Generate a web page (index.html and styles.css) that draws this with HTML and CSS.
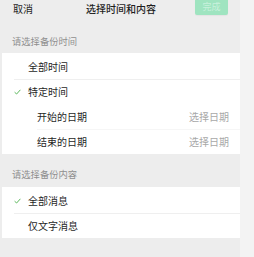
FILE: index.html
```html
<!DOCTYPE html>
<html lang="zh">
<head>
<meta charset="utf-8">
<link rel="stylesheet" href="styles.css">
</head>
<body>
<div class="page">
  <div class="main">
    <div class="header">
      <span class="cancel">取消</span>
      <span class="title">选择时间和内容</span>
      <span class="done">完成</span>
    </div>
    <div class="label first">请选择备份时间</div>
    <div class="panel">
      <div class="row"><span class="check"></span><span class="txt">全部时间</span></div>
      <div class="row sep"><span class="check"><svg width="7" height="6" viewBox="0 0 7 6"><path d="M0.6 3.2 L2.6 5 L6.4 0.8" fill="none" stroke="#5cb85c" stroke-width="1"/></svg></span><span class="txt">特定时间</span></div>
      <div class="row sub"><span class="txt">开始的日期</span><span class="val">选择日期</span></div>
      <div class="row sub sep2"><span class="txt">结束的日期</span><span class="val">选择日期</span></div>
    </div>
    <div class="label second">请选择备份内容</div>
    <div class="panel">
      <div class="row"><span class="check"><svg width="7" height="6" viewBox="0 0 7 6"><path d="M0.6 3.2 L2.6 5 L6.4 0.8" fill="none" stroke="#5cb85c" stroke-width="1"/></svg></span><span class="txt">全部消息</span></div>
      <div class="row sep"><span class="check"></span><span class="txt">仅文字消息</span></div>
    </div>
  </div>
  <div class="strip"></div>
</div>
</body>
</html>
```
FILE: styles.css
```css
html, body {
  margin: 0;
  padding: 0;
}
body {
  font-family: "Noto Sans CJK SC", "Noto Sans", sans-serif;
  font-size: 10px;
  color: #1f1f1f;
  background: #ededed;
}
.page {
  display: flex;
  height: 257px;
  overflow: hidden;
}
.main {
  width: 240px;
  background: #ededed;
}
.strip {
  flex: 1;
  background: #f3f3f3;
}
.header {
  display: flex;
  align-items: center;
  height: 18px;
  padding-left: 13px;
  padding-right: 12px;
  line-height: 12px;
}
.cancel {
  width: 73px;
}
.title {
  flex: 1;
  font-weight: 500;
}
.done {
  align-self: flex-start;
  margin-top: -3px;
  width: 33px;
  height: 18px;
  line-height: 20px;
  text-align: center;
  background: #9fe4c0;
  color: #c8f1dc;
  border-radius: 2px;
  font-size: 9px;
  box-shadow: 0 1px 1px rgba(0,0,0,0.04);
}
.label {
  line-height: 12px;
  font-size: 9.3px;
  color: #8f8f8f;
  padding-left: 12px;
}
.label.first {
  padding-top: 17px;
  padding-bottom: 6px;
}
.label.second {
  padding-top: 14px;
  padding-bottom: 7px;
}
.panel {
  background: #ffffff;
  margin-left: 2px;
  padding-top: 1px;
}
.row {
  display: flex;
  align-items: center;
  height: 25px;
  padding-left: 12px;
  padding-right: 11px;
}
.row.sep {
  background: linear-gradient(#efefef, #efefef) no-repeat 12px 0 / calc(100% - 12px) 1px;
}
.check {
  width: 14px;
  display: flex;
  align-items: center;
}
.sub {
  padding-left: 35px;
}
.sub.sep2 {
  background: linear-gradient(#f6f6f6, #f6f6f6) no-repeat 35px 0 / calc(100% - 35px) 1px;
}
.txt {
  flex: 1;
}
.val {
  color: #a8a8a8;
}
```
